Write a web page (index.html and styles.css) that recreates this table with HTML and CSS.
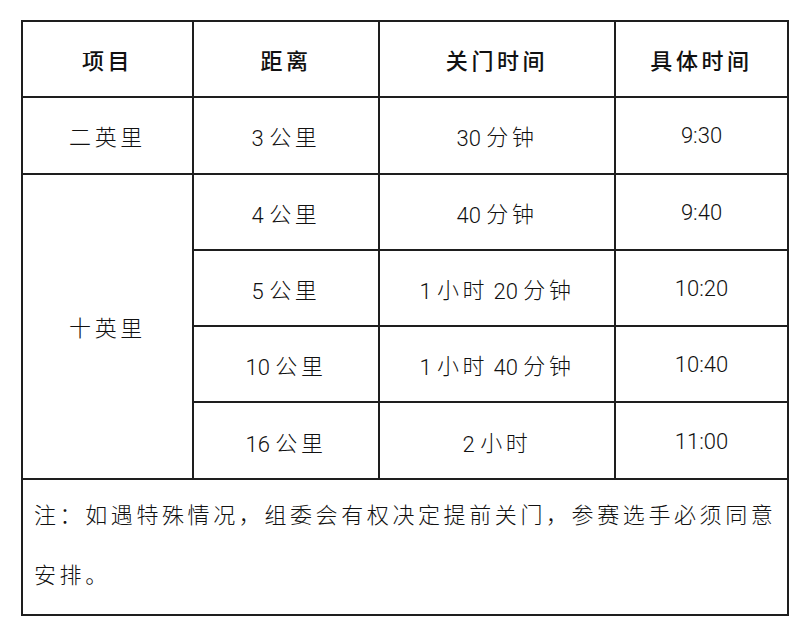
FILE: index.html
```html
<!DOCTYPE html>
<html lang="zh-CN">
<head>
<meta charset="utf-8">
<title>关门时间</title>
<link rel="stylesheet" href="styles.css">
</head>
<body>
<table class="schedule">
  <colgroup>
    <col class="c1"><col class="c2"><col class="c3"><col class="c4">
  </colgroup>
  <thead>
    <tr class="row">
      <th>项目</th>
      <th>距离</th>
      <th>关门时间</th>
      <th>具体时间</th>
    </tr>
  </thead>
  <tbody>
    <tr class="row">
      <td>二英里</td>
      <td><span class="n">3 </span>公里</td>
      <td><span class="n">30 </span>分钟</td>
      <td><span class="n">9:30</span></td>
    </tr>
    <tr class="row">
      <td rowspan="4">十英里</td>
      <td><span class="n">4 </span>公里</td>
      <td><span class="n">40 </span>分钟</td>
      <td><span class="n">9:40</span></td>
    </tr>
    <tr class="row">
      <td><span class="n">5 </span>公里</td>
      <td><span class="n">1 </span>小时<span class="n"> 20 </span>分钟</td>
      <td><span class="n">10:20</span></td>
    </tr>
    <tr class="row">
      <td><span class="n">10 </span>公里</td>
      <td><span class="n">1 </span>小时<span class="n"> 40 </span>分钟</td>
      <td><span class="n">10:40</span></td>
    </tr>
    <tr class="row">
      <td><span class="n">16 </span>公里</td>
      <td><span class="n">2 </span>小时</td>
      <td><span class="n">11:00</span></td>
    </tr>
    <tr>
      <td class="note" colspan="4">注：如遇特殊情况，组委会有权决定提前关门，参赛选手必须同意<br>安排。</td>
    </tr>
  </tbody>
</table>
</body>
</html>
```
FILE: styles.css
```css
html, body {
  margin: 0;
  padding: 0;
  background: #ffffff;
}

body {
  padding: 20px 0 0 21px;
  font-family: "Liberation Sans", "Noto Sans CJK SC", sans-serif;
  color: #111111;
}

.schedule {
  border-collapse: collapse;
  width: 766px;
  table-layout: fixed;
  font-size: 22px;
}

.c1 { width: 171px; }
.c2 { width: 186px; }
.c3 { width: 236px; }
.c4 { width: 173px; }

.schedule th,
.schedule td {
  border: 2px solid #1e1e1e;
  padding: 0;
  text-align: center;
  vertical-align: middle;
  letter-spacing: 3.6px;
  white-space: nowrap;
  font-weight: 300;
}

.schedule th {
  font-weight: 500;
}

.row {
  height: 76.3px;
}

.n {
  font-family: Roboto, "Liberation Sans", sans-serif;
  font-weight: 300;
  letter-spacing: 0;
  position: relative;
  top: 1px;
}

.schedule td.note {
  text-align: left;
  line-height: 60px;
  padding: 6px 10px 8px 11px;
  vertical-align: top;
}
```
